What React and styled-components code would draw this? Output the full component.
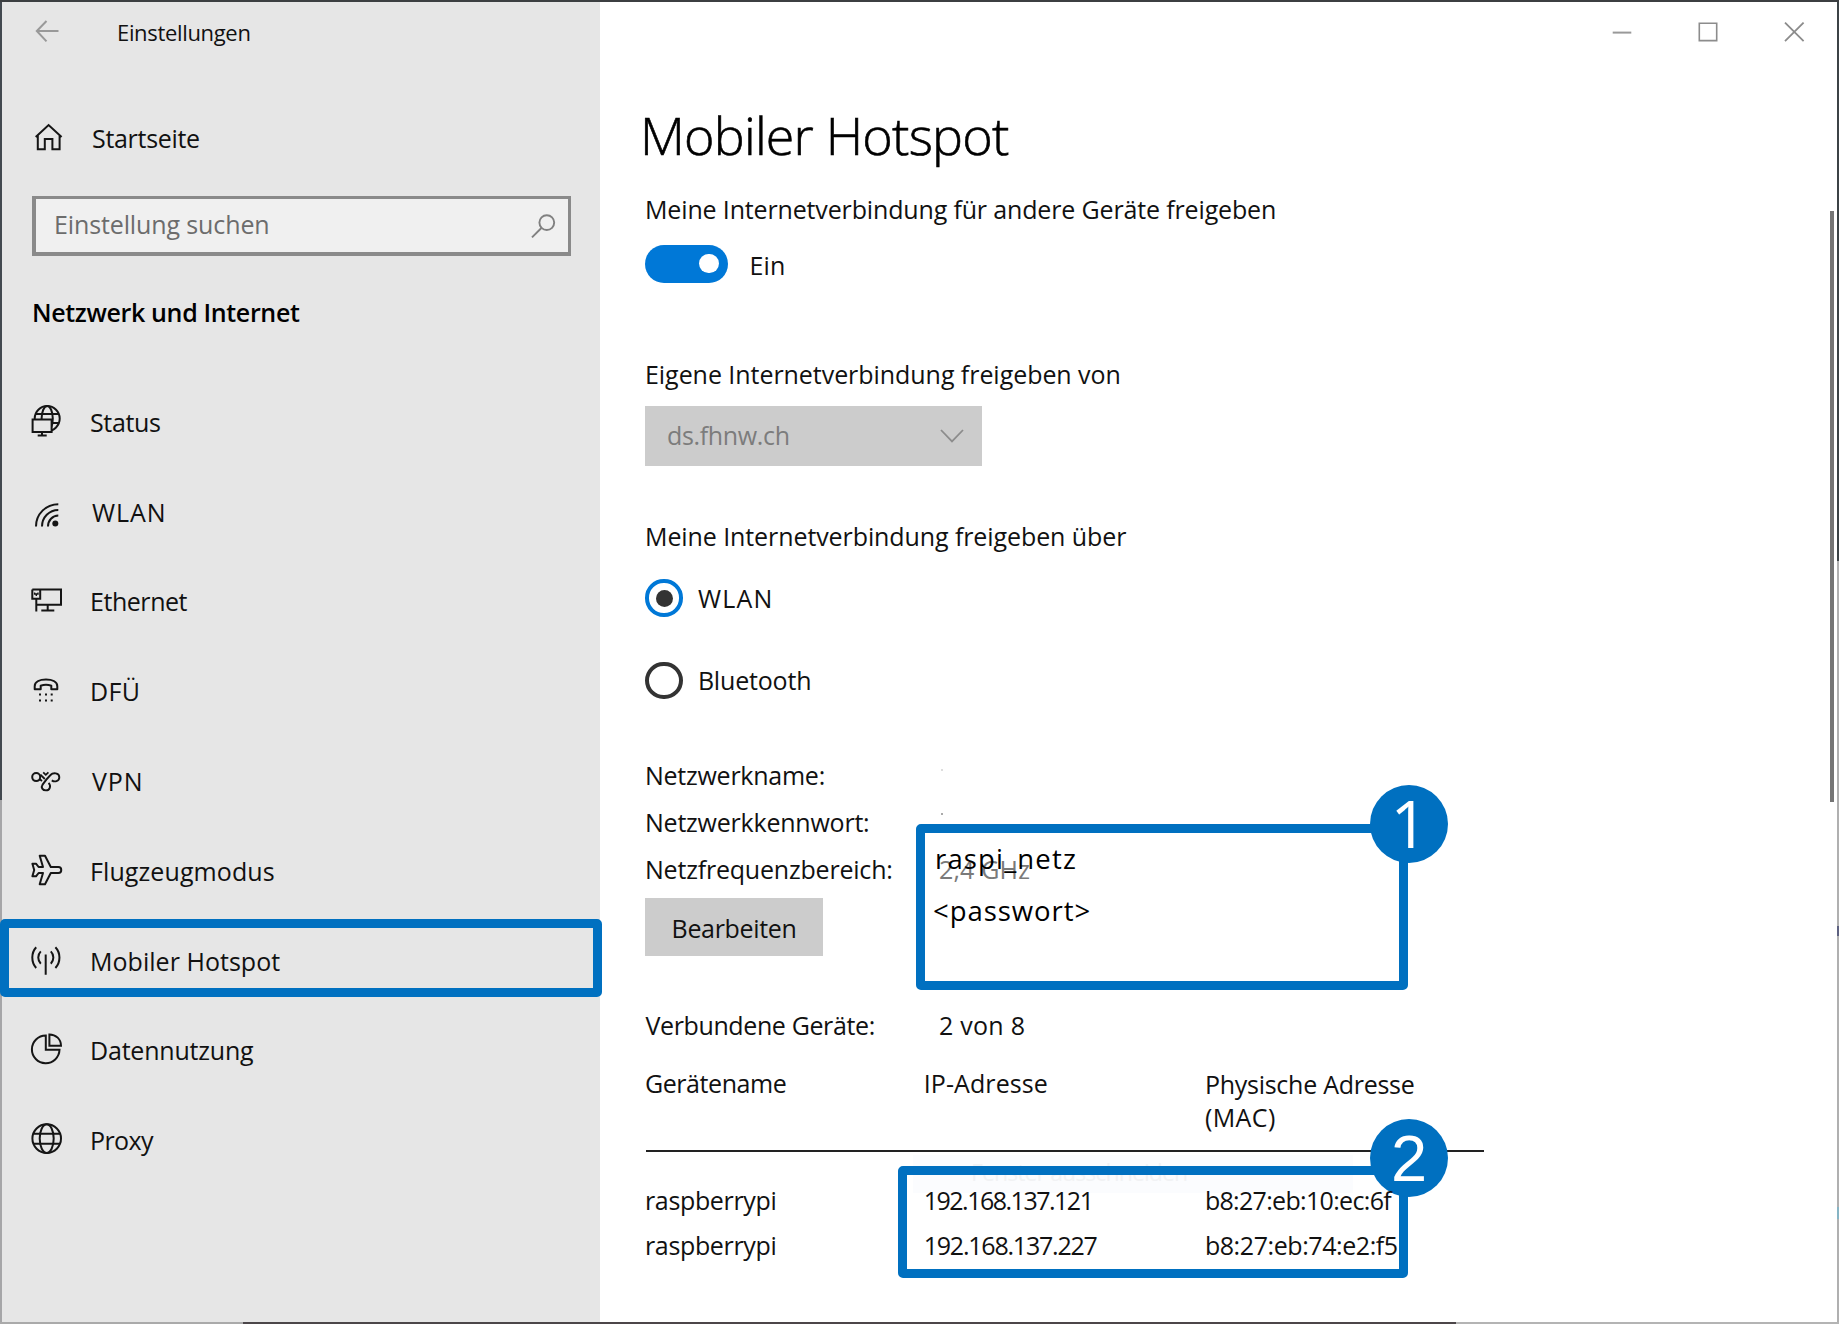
import React from "react";
import styled, { createGlobalStyle } from "styled-components";

const GlobalStyle = createGlobalStyle`
  *, *::before, *::after { box-sizing: border-box; }
  body { margin: 0; overflow: hidden; }
  svg { display: block; flex: none; }
`;

const accent = "#0070c0";

/* ---------- shared ---------- */

const Text = styled.span`
  display: block;
  white-space: nowrap;
  font-size: ${(p) => p.$size || 25}px;
  line-height: ${(p) => p.$line || 34}px;
  font-weight: ${(p) => p.$weight || 400};
  letter-spacing: ${(p) => p.$track || 0}px;
  color: ${(p) => p.$color || "#111"};
  margin-left: ${(p) => p.$dx || 0}px;
  margin-top: ${(p) => p.$top || 0}px;
`;

const Title = styled.h1`
  margin: 38px 0 0 -5px;
  font-size: 52px;
  line-height: 70px;
  font-weight: 300;
  letter-spacing: -0.8px;
  white-space: nowrap;
  color: #000;
  -webkit-text-stroke: 0.6px #000;
`;

const Window = styled.div`
  position: relative;
  width: 1839px;
  height: 1324px;
  padding: 2px;
  display: flex;
  font-family: "Open Sans", "Noto Sans", sans-serif;
  background:
    linear-gradient(#3c3f41, #3c3f41) 0 0 / 100% 2px no-repeat,
    linear-gradient(90deg, #aaa 0 243px, #4c4649 243px 1456px, #b4b4b4 1456px) 0 100% / 100% 2px no-repeat,
    linear-gradient(#434950 0 800px, #a6a6a8 800px) 0 0 / 2px 100% no-repeat,
    linear-gradient(#3c4346 0 561px, #b0b0b0 561px 926px, #5d6180 926px 936px, #b0b0b0 936px 1207px, #86b4c4 1207px 1219px, #b0b0b0 1219px) 100% 0 / 2px 100% no-repeat,
    #fff;
`;

/* ---------- sidebar ---------- */

const Sidebar = styled.aside`
  width: 598px;
  background: #e6e6e6;
  display: flex;
  flex-direction: column;
`;

const SidebarTitle = styled.header`
  height: 60px;
  display: flex;
  align-items: center;
  padding: 0 0 0 32px;
  gap: 57px;
`;

const HomeRow = styled.div`
  display: flex;
  align-items: center;
  height: 40px;
  margin-top: 56px;
  padding-left: 28px;
  gap: 26px;
`;

const SearchBox = styled.div`
  display: flex;
  align-items: center;
  justify-content: space-between;
  width: 539px;
  height: 60px;
  margin: 38px 0 0 30px;
  padding: 0 12px 0 18px;
  border: 4px solid #8a8a8a;
  border-width: 3px 3.5px 4px 4px;
  background: #f0f0f0;
`;

const SectionTitle = styled.div`
  margin: 39px 0 0 30px;
`;

const Nav = styled.nav`
  margin-top: 48px;
  display: flex;
  flex-direction: column;
`;

const NavRow = styled.div`
  position: relative;
  height: 89.8px;
  display: flex;
  align-items: center;
  padding-left: 28px;
  gap: 24px;

  svg { margin-bottom: 2.2px; }
`;

const NavHighlight = styled.div`
  position: absolute;
  left: -2px;
  top: 3px;
  width: 602px;
  height: 78px;
  border: 9px solid ${accent};
  border-radius: 5px;
  z-index: 1;
`;

/* ---------- main ---------- */

const Main = styled.main`
  flex: 1;
  display: flex;
  flex-direction: column;
  padding-left: 45px;
`;

const WindowControls = styled.div`
  height: 60px;
  display: flex;
  justify-content: flex-end;
  padding: 20px 32px 0 0;
  gap: 64px;
`;

const Block = styled.div`
  margin-top: ${(p) => p.$gap}px;
`;

const ToggleRow = styled.div`
  display: flex;
  align-items: center;
  height: 38px;
  margin: 18.8px 0 0 0;
  gap: 22px;
`;

const Switch = styled.div`
  width: 82.5px;
  height: 38px;
  border-radius: 19px;
  background: #0078d7;
  display: flex;
  align-items: center;
  justify-content: flex-end;
  padding-right: 9px;
`;

const Knob = styled.div`
  width: 19.5px;
  height: 19.5px;
  border-radius: 50%;
  background: #fff;
`;

const Select = styled.div`
  display: flex;
  align-items: center;
  justify-content: space-between;
  width: 337px;
  height: 60px;
  margin: 15px 0 0 0;
  padding: 0 17px 0 22px;
  background: #ccc;
`;

const RadioRow = styled.div`
  display: flex;
  align-items: center;
  height: 38px;
  margin: ${(p) => p.$gap}px 0 0 0.4px;
  gap: 14px;
`;

const Radio = styled.div`
  width: 37.5px;
  height: 37.5px;
  border-radius: 50%;
  border: 4px solid ${(p) => (p.$on ? "#0078d7" : "#333")};
  display: flex;
  align-items: center;
  justify-content: center;

  &::after {
    content: "";
    width: 17px;
    height: 17px;
    border-radius: 50%;
    background: ${(p) => (p.$on ? "#333" : "transparent")};
  }
`;

const Facts = styled.div`
  margin-top: 52.5px;
`;

const FactRow = styled.div`
  display: grid;
  grid-template-columns: 294px 1fr;
  align-items: center;
  height: 46.7px;
`;

const Speck = styled.i`
  width: 2px;
  height: 2px;
  margin: ${(p) => p.$y}px 0 0 2px;
  align-self: start;
  background: ${(p) => p.$tone};
`;

const Button = styled.div`
  display: flex;
  align-items: center;
  justify-content: center;
  width: 178px;
  height: 58px;
  margin: 6px 0 0 0;
  background: #ccc;
`;

const Columns = styled.div`
  display: grid;
  grid-template-columns: 278.7px 281.2px 1fr;
  align-items: ${(p) => (p.$head ? "start" : "center")};
  height: ${(p) => (p.$head ? 84.7 : 45)}px;
`;

const Rule = styled.div`
  width: 838px;
  height: 2px;
  margin: 0 0 25.5px 0.5px;
  background: #222;
`;

const Scrollbar = styled.div`
  position: absolute;
  left: 1830px;
  top: 211px;
  width: 4px;
  height: 591px;
  background: #757575;
`;

/* ---------- annotations over the window ---------- */

const Callout = styled.div`
  position: absolute;
  left: ${(p) => p.$x}px;
  top: ${(p) => p.$y}px;
  width: ${(p) => p.$w}px;
  height: ${(p) => p.$h}px;
  border: 9px solid ${accent};
  border-radius: 5px;
`;

const Badge = styled.div`
  position: absolute;
  left: 1370px;
  top: ${(p) => p.$y}px;
  width: 78px;
  height: 78px;
  border-radius: 50%;
  background: ${accent};
  color: #fff;
  font: 65px/${(p) => p.$line}px ${(p) => p.$face};
  text-align: center;
`;

const Note = styled.div`
  position: absolute;
  left: ${(p) => p.$x}px;
  top: ${(p) => p.$y}px;
`;

const Ghost = styled.div`
  position: absolute;
  left: 913px;
  top: 1155px;
  width: 440px;
  height: 38px;
  padding-left: 58px;
  background: #fbfcfe;
  z-index: 0;
`;

const Layer = styled.div`
  position: relative;
  z-index: 1;
`;

/* ---------- icons ---------- */

const Icon = ({ children }) => (
  <svg width="36" height="40" viewBox="0 0 36 40" fill="none" stroke="#151515" strokeWidth="2">
    {children}
  </svg>
);

const icons = {
  home: (
    <Icon>
      <path d="M5.7 19 18.6 7 31.6 19M7.8 17.2V31.2H14.8V21H22.4V31.2H29.6V17.2" />
    </Icon>
  ),
  status: (
    <Icon>
      <circle cx="17.2" cy="17.6" r="12.5" />
      <ellipse cx="17.2" cy="17.6" rx="5.6" ry="12.5" />
      <path d="M6 13H28.6M5 22H29" />
      <path d="M2.6 18.6H21.6V31H2.6Z" fill="#e6e6e6" />
      <path d="M12 31V34M7.7 34.4H16.7" />
    </Icon>
  ),
  wlan: (
    <Icon>
      <path d="M6 35.5C6 23 16 13.2 28.3 13.2M12 35.5C12 26.3 19.2 18.9 28.3 18.9M18 35.5C18 29.5 22.5 24.6 28.3 24.6" />
      <circle cx="25.3" cy="32.4" r="3" fill="#151515" stroke="none" />
    </Icon>
  ),
  ethernet: (
    <Icon>
      <path d="M2.3 9.6H31V24.8H6.3M2.3 9.6V18.7H10.2V9.6M6.3 18.7V31.5M17.7 24.8V30.4M11.3 30.6H24.3" />
      <path d="M4.6 12.6V14H8V12.6M6.3 14V16" strokeWidth="1.4" />
    </Icon>
  ),
  dial: (
    <Icon>
      <path d="M4.7 19.2V16.2C4.7 11.6 10 9.6 16 9.6S27.3 11.6 27.3 16.2V19.2H21.3V15.8C18 14.6 14 14.6 10.7 15.8V19.2Z" strokeLinejoin="round" />
      <path d="M9 24.6H11M15 24.6H17M20.7 24.6H22.7M9 30.6H11M15 30.6H17M20.7 30.6H22.7" />
    </Icon>
  ),
  vpn: (
    <Icon>
      <circle cx="6.2" cy="17.1" r="4" />
      <path d="M12.6 24.6C15 21 18 17.5 20.5 15 23 12.3 29.3 12.5 29.3 17.2 29.3 21.5 24.5 22.3 21.8 20.4M18.6 22.8C21.6 26 19.6 30.4 16 30.4 12.6 30.4 10.6 27.6 12.6 24.6" strokeWidth="1.9" />
      <path d="M9.6 19 12 21M10.4 14.6 14.8 19M13.2 12.4 15.8 14.8 18.4 12.4" strokeWidth="1.8" />
    </Icon>
  ),
  plane: (
    <Icon>
      <path d="M9.7 5.8H15L20.8 17H28.4C32.2 17 32.2 23 28.4 23H20.8L15 34.2H9.7L13 23H8.6L6 26.3H2.4L4.2 20 2.4 13.7H6L8.6 17H13Z" strokeLinejoin="round" />
    </Icon>
  ),
  hotspot: (
    <Icon>
      <path d="M15.7 14.4V34.8M6.2 7.2C1 12.8 1 22.4 6.2 28M25.4 7.2C30.8 12.8 30.8 22.4 25.4 28M10.8 11.4C7.4 14.8 7.4 20.2 10.8 23.8M20.8 11.4C24.2 14.8 24.2 20.2 20.8 23.8" />
    </Icon>
  ),
  data: (
    <Icon>
      <path d="M15.8 6.6A13.8 13.8 0 1 0 29.5 20.8H15.8ZM19.4 5.4V16.8H31C31 10.2 26 5.4 19.4 5.4Z" />
    </Icon>
  ),
  proxy: (
    <Icon>
      <circle cx="16.7" cy="19.6" r="14.3" />
      <ellipse cx="16.7" cy="19.6" rx="7" ry="14.3" />
      <path d="M3.4 14.7H30M3.4 24.7H30" />
    </Icon>
  ),
};

const navItems = [
  { icon: "status", label: "Status", track: -0.35 },
  { icon: "wlan", label: "WLAN", track: 0.9, dx: 2 },
  { icon: "ethernet", label: "Ethernet", track: -0.45 },
  { icon: "dial", label: "DFÜ", track: 0.4 },
  { icon: "vpn", label: "VPN", track: 0.9, dx: 2 },
  { icon: "plane", label: "Flugzeugmodus", track: 0.1 },
  { icon: "hotspot", label: "Mobiler Hotspot", track: 0.03, selected: true },
  { icon: "data", label: "Datennutzung", track: -0.2 },
  { icon: "proxy", label: "Proxy", track: -0.6 },
];

const devices = [
  { name: "raspberrypi", ip: "192.168.137.121", ipTrack: -1.5, mac: "b8:27:eb:10:ec:6f", macTrack: -0.68 },
  { name: "raspberrypi", ip: "192.168.137.227", ipTrack: -1.22, mac: "b8:27:eb:74:e2:f5", macTrack: -0.42 },
];

export default function App() {
  return (
    <>
      <GlobalStyle />
      <Window>
        <Sidebar>
          <SidebarTitle>
            <svg width="26" height="24" viewBox="0 0 26 24" fill="none" stroke="#999" strokeWidth="2">
              <path d="M24.5 11H3M12.5 1 2.8 11 12.5 21.4" />
            </svg>
            <Text $size={22} $track={-0.33}>Einstellungen</Text>
          </SidebarTitle>
          <HomeRow>
            {icons.home}
            <Text $track={-0.3}>Startseite</Text>
          </HomeRow>
          <SearchBox>
            <Text $track={-0.12} $top={-4} $color="#6c6c6c">Einstellung suchen</Text>
            <svg width="26" height="26" viewBox="0 0 26 26" fill="none" stroke="#808080" strokeWidth="1.9">
              <circle cx="16.8" cy="9.6" r="7.4" />
              <path d="M11.4 15 2 24.4" />
            </svg>
          </SearchBox>
          <SectionTitle>
            <Text $weight={600} $track={-0.35} $color="#000">Netzwerk und Internet</Text>
          </SectionTitle>
          <Nav>
            {navItems.map((item) => (
              <NavRow key={item.label}>
                {icons[item.icon]}
                <Text $track={item.track} $dx={item.dx}>{item.label}</Text>
                {item.selected && <NavHighlight />}
              </NavRow>
            ))}
          </Nav>
        </Sidebar>

        <Main>
          <WindowControls>
            <svg width="22" height="22" viewBox="0 0 22 22" stroke="#999" strokeWidth="2">
              <path d="M1.7 10.6H20.3" />
            </svg>
            <svg width="22" height="22" viewBox="0 0 22 22" fill="none" stroke="#8c8c8c" strokeWidth="1.6">
              <path d="M2.3 1.2H19.7V18.6H2.3Z" />
            </svg>
            <svg width="22" height="22" viewBox="0 0 22 22" fill="none" stroke="#8c8c8c" strokeWidth="1.8">
              <path d="M2 0.6 20.6 19.2M20.6 0.6 2 19.2" />
            </svg>
          </WindowControls>

          <Title>Mobiler Hotspot</Title>
          <Block $gap={21.8}>
            <Text $track={-0.15}>Meine Internetverbindung für andere Geräte freigeben</Text>
          </Block>
          <ToggleRow>
            <Switch><Knob /></Switch>
            <Text $track={0.1} $top={3}>Ein</Text>
          </ToggleRow>
          <Block $gap={74.2}>
            <Text $track={-0.05}>Eigene Internetverbindung freigeben von</Text>
          </Block>
          <Select>
            <Text $track={-0.34} $top={-1} $color="#7c7c7c">ds.fhnw.ch</Text>
            <svg width="26" height="16" viewBox="0 0 26 16" fill="none" stroke="#8c8c8c" strokeWidth="1.8">
              <path d="M2 2 13 13.4 24 2" />
            </svg>
          </Select>
          <Block $gap={53}>
            <Text $track={-0.09}>Meine Internetverbindung freigeben über</Text>
          </Block>
          <RadioRow $gap={26.3}>
            <Radio $on />
            <Text $track={1.2} $dx={1}>WLAN</Text>
          </RadioRow>
          <RadioRow $gap={44.4}>
            <Radio />
            <Text $track={-0.18} $dx={1} $top={-1}>Bluetooth</Text>
          </RadioRow>

          <Facts>
            <FactRow>
              <Text $track={-0.25}>Netzwerkname:</Text>
              <Speck $y={17} $tone="#ddd" />
            </FactRow>
            <FactRow>
              <Text $track={-0.22}>Netzwerkkennwort:</Text>
              <Speck $y={14} $tone="#aaa" />
            </FactRow>
            <FactRow>
              <Text $track={-0.2}>Netzfrequenzbereich:</Text>
              <Text $track={0.17} $color="#7a7a7a">2,4 GHz</Text>
            </FactRow>
          </Facts>
          <Button>
            <Text $track={-0.34} $top={1}>Bearbeiten</Text>
          </Button>

          <Block $gap={46}>
            <FactRow>
              <Text $track={-0.38} $dx={0.5}>Verbundene Geräte:</Text>
              <Text $track={0.25}>2 von 8</Text>
            </FactRow>
          </Block>

          <Block $gap={16.8}>
            <Columns $head>
              <Text $track={-0.44}>Gerätename</Text>
              <Text $track={0.1}>IP-Adresse</Text>
              <div>
                <Text $track={-0.26} $top={2} $line={33.5}>Physische Adresse</Text>
                <Text $track={0.4} $line={33.5}>(MAC)</Text>
              </div>
            </Columns>
            <Rule />
            <Ghost>
              <Text $track={-0.9} $size={23} $color="#f1f2f4">Fenster ausschneiden</Text>
            </Ghost>
            <Layer>
              {devices.map((d) => (
                <Columns key={d.ip}>
                  <Text $track={-0.35}>{d.name}</Text>
                  <Text $track={d.ipTrack}>{d.ip}</Text>
                  <Text $track={d.macTrack}>{d.mac}</Text>
                </Columns>
              ))}
            </Layer>
          </Block>
        </Main>

        <Scrollbar />

        <Note $x={935} $y={842}>
          <Text $size={27.5} $track={1.15} $color="#000">raspi_netz</Text>
        </Note>
        <Note $x={933} $y={893.5}>
          <Text $size={27.5} $track={0.95} $color="#000">&lt;passwort&gt;</Text>
        </Note>
        <Callout $x={916} $y={824} $w={492} $h={166} />
        <Callout $x={898} $y={1166} $w={510} $h={112} />
        <Badge $y={785} $line={77} $face={'"Open Sans", sans-serif'}>1</Badge>
        <Badge $y={1119} $line={79} $face={'"Liberation Sans", sans-serif'}>2</Badge>
      </Window>
    </>
  );
}
